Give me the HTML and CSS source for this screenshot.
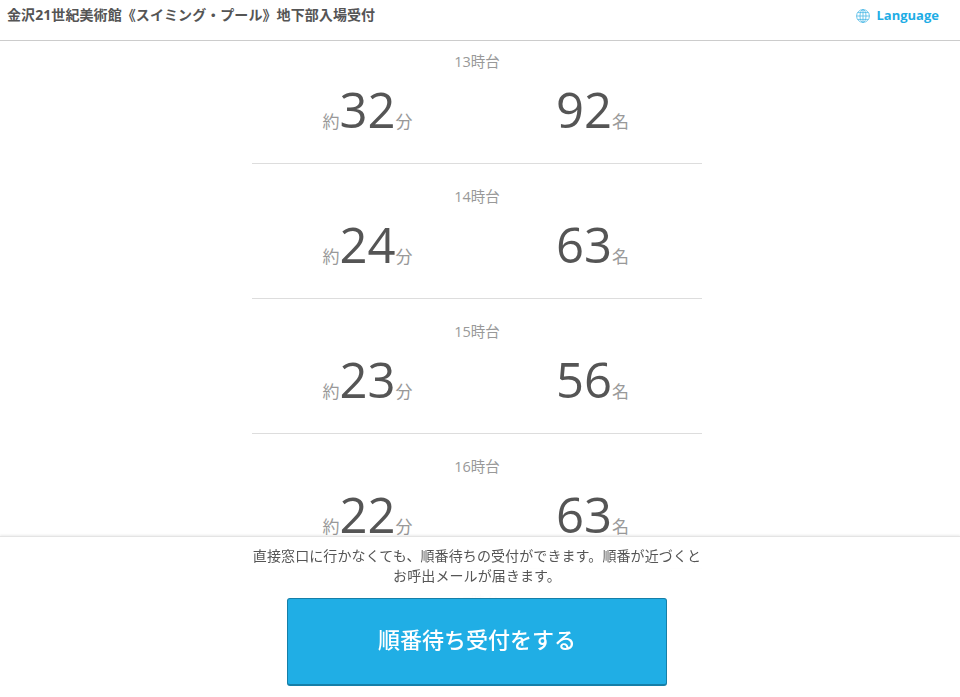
FILE: index.html
```html
<!DOCTYPE html>
<html lang="ja">
<head>
<meta charset="utf-8">
<title>金沢21世紀美術館</title>
<link rel="stylesheet" href="styles.css">
</head>
<body>
<header class="header">
  <h1 class="title">金沢21世紀美術館《スイミング・プール》地下部入場受付</h1>
  <a class="lang" href="#">
    <svg class="globe" viewBox="0 0 14 14" width="14" height="14" fill="none" stroke="#4db9e6" stroke-width="0.8">
      <circle cx="7" cy="7" r="6.4"/>
      <ellipse cx="7" cy="7" rx="3" ry="6.4"/>
      <path d="M7 .6v12.8M.6 7h12.8M1.6 3.6h10.8M1.6 10.4h10.8"/>
    </svg>
    Language
  </a>
</header>
<main class="list">
  <section class="row">
    <div class="hour">13時台</div>
    <div class="stats">
      <div class="stat"><span class="unit">約</span><span class="num">32</span><span class="unit">分</span></div>
      <div class="stat"><span class="num">92</span><span class="unit">名</span></div>
    </div>
  </section>
  <section class="row">
    <div class="hour">14時台</div>
    <div class="stats">
      <div class="stat"><span class="unit">約</span><span class="num">24</span><span class="unit">分</span></div>
      <div class="stat"><span class="num">63</span><span class="unit">名</span></div>
    </div>
  </section>
  <section class="row">
    <div class="hour">15時台</div>
    <div class="stats">
      <div class="stat"><span class="unit">約</span><span class="num">23</span><span class="unit">分</span></div>
      <div class="stat"><span class="num">56</span><span class="unit">名</span></div>
    </div>
  </section>
  <section class="row">
    <div class="hour">16時台</div>
    <div class="stats">
      <div class="stat"><span class="unit">約</span><span class="num">22</span><span class="unit">分</span></div>
      <div class="stat"><span class="num">63</span><span class="unit">名</span></div>
    </div>
  </section>
  <section class="row">
    <div class="hour">17時台</div>
    <div class="stats">
      <div class="stat"><span class="unit">約</span><span class="num">20</span><span class="unit">分</span></div>
      <div class="stat"><span class="num">40</span><span class="unit">名</span></div>
    </div>
  </section>
</main>
<footer class="footer">
  <p class="note">直接窓口に行かなくても、順番待ちの受付ができます。順番が近づくと<br>お呼出メールが届きます。</p>
  <button class="cta" type="button">順番待ち受付をする</button>
</footer>
</body>
</html>
```
FILE: styles.css
```css
* { box-sizing: border-box; }
html, body { height: 100%; }
body {
  margin: 0;
  overflow: hidden;
  background: #fff;
  color: #555;
  font-family: "Open Sans", "Noto Sans CJK JP", sans-serif;
}
.header {
  height: 41px;
  border-bottom: 1px solid #ccc;
  display: flex;
  justify-content: space-between;
  padding: 6px 21px 0 7px;
}
.title {
  margin: 0;
  font-size: 14px;
  letter-spacing: 0.08px;
  font-weight: 700;
  line-height: 18px;
  color: #555;
}
.lang {
  display: flex;
  align-items: center;
  gap: 6px;
  height: 18px;
  font-size: 13px;
  font-weight: 700;
  color: #1fade5;
  text-decoration: none;
}
.globe { margin-top: 2px; }
.list {
  width: 450px;
  margin-left: 252px;
}
.row {
  height: 135px;
  border-bottom: 1px solid #ddd;
}
.row:first-child { height: 123px; padding-top: 12px; }
.row:not(:first-child) { padding-top: 24px; }
.hour {
  text-align: center;
  font-size: 14.5px;
  line-height: 18px;
  color: #999;
}
.stats { display: flex; margin-top: 8px; }
.stat {
  flex: 1;
  text-align: center;
  padding-left: 6px;
  line-height: 60px;
  height: 60px;
}
.num { font-size: 49px; color: #555; }
.unit { font-size: 17px; color: #999; }
.footer {
  position: fixed;
  left: 0;
  right: 0;
  bottom: 0;
  height: 161px;
  background: rgba(255, 255, 255, 0.97);
  border-top: 1px solid #e4e4e4;
  box-shadow: 0 -1px 2px rgba(0, 0, 0, 0.08);
  padding: 9px 6px 0 0;
  display: flex;
  flex-direction: column;
  align-items: center;
}
.note {
  margin: 0;
  text-align: center;
  font-size: 14px;
  letter-spacing: 0.1px;
  line-height: 20px;
  color: #555;
}
.cta {
  margin-top: 12px;
  width: 380px;
  height: 88px;
  padding: 0 0 8px;
  background: #20aee5;
  border: 1px solid #157fa8;
  border-bottom-width: 2px;
  border-radius: 3px;
  color: #fff;
  font-family: inherit;
  font-size: 22px;
  font-weight: 500;
}
```
